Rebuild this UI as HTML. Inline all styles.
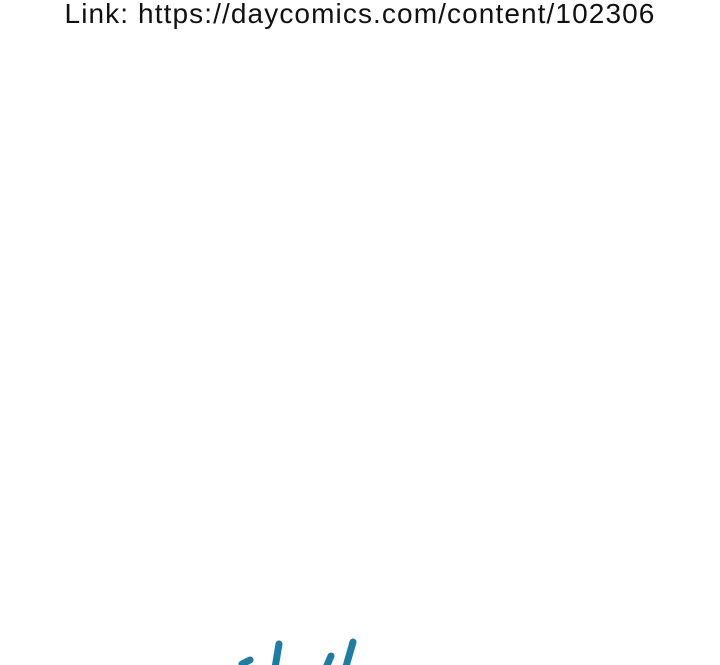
<!DOCTYPE html>
<html><head><style>
html,body{margin:0;padding:0;background:#fff;width:720px;height:665px;overflow:hidden;position:relative}
.t{position:absolute;top:-3px;left:0;width:720px;text-align:center;font-family:"Liberation Sans",sans-serif;font-size:28px;letter-spacing:1.1px;color:#111;white-space:nowrap;line-height:34px}
svg{position:absolute;left:0;top:0}
</style></head><body>
<div class="t">Link: https://daycomics.com/content/102306</div>
<svg width="720" height="665">
<g stroke="#1b7ea6" stroke-linecap="round" fill="none" stroke-width="7">
<path d="M242 664 L250 660"/>
<path d="M279 644 L275 668"/>
<path d="M331 656 L325 670"/>
<path d="M353 642 L345 670"/>
</g>
</svg>
</body></html>
